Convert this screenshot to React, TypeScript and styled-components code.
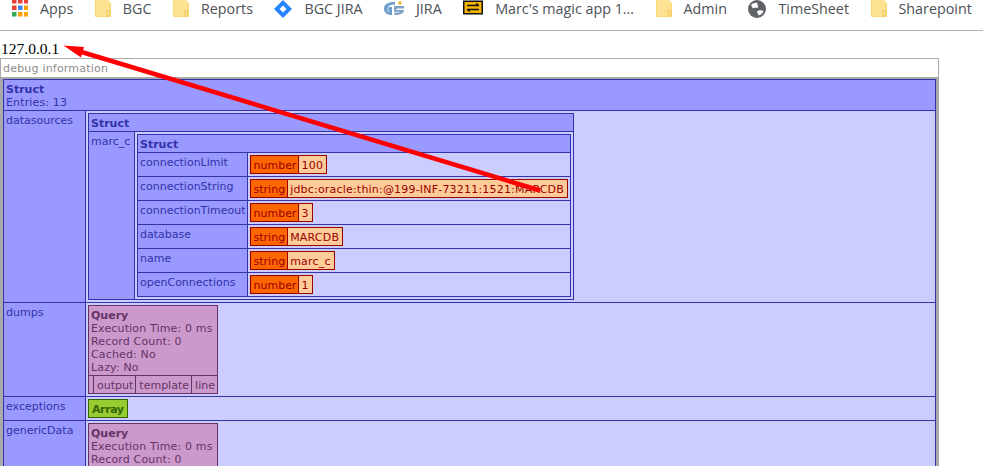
import React from "react";
import styled, { createGlobalStyle } from "styled-components";

const Global = createGlobalStyle`
  html, body { margin: 0; padding: 0; background: #fff; overflow: hidden; }
  #root { height: 466px; overflow: hidden; }
`;

const Page = styled.div`
  position: relative;
  width: 983px;
  height: 466px;
  overflow: hidden;
`;

const Bar = styled.nav`
  display: flex;
  align-items: flex-start;
  height: 30px;
  padding-left: 12px;
  gap: 21.5px;
  border-bottom: 1px solid #b4b4b4;
  box-sizing: content-box;
`;

const Bookmark = styled.div`
  display: flex;
  align-items: flex-start;
  gap: 12px;
  font: 14.3px/17px "Open Sans", sans-serif;
  color: #4d5156;
  white-space: nowrap;
  svg { flex: none; display: block; }
`;

const Address = styled.div`
  font: 15.5px/18px "Liberation Serif", serif;
  color: #000;
  padding: 9px 0 0 1px;
  height: 18px;
`;

const DebugBox = styled.section`
  margin-top: 0;
  width: 939px;
  box-sizing: border-box;
  border: 1px solid #a9a9a9;
  background: #a9a9a9;
  padding: 0 2px 2px 2px;
`;

const DebugTitle = styled.div`
  background: #fff;
  margin: 0 -2px 2px;
  height: 18px;
  padding-left: 2px;
  font: 11px/19px "DejaVu Sans", sans-serif;
  letter-spacing: 0.2px;
  color: #8c8c8c;
`;

const palette = {
  struct: { head: "#9999ff", body: "#ccccff", line: "#3333aa", text: "#3333aa" },
  query: { head: "#cc99cc", body: "#cc99cc", line: "#663366", text: "#663366" },
};

type Tone = keyof typeof palette;

const Dump = styled.table<{ $tone?: Tone; $wide?: boolean }>`
  border-collapse: collapse;
  border-spacing: 0;
  ${(p) => (p.$wide ? "width: 100%;" : "")}
  ${(p) => (p.$tone === "query" ? "min-width: 130px;" : "")}
  background: ${(p) => palette[p.$tone ?? "struct"].body};
  border: 1px solid ${(p) => palette[p.$tone ?? "struct"].line};
  color: ${(p) => palette[p.$tone ?? "struct"].text};
  font: 11px/13px "DejaVu Sans", sans-serif;
  td, th { border: 1px solid ${(p) => palette[p.$tone ?? "struct"].line}; }
`;

const Head = styled.th<{ $tone?: Tone }>`
  background: ${(p) => palette[p.$tone ?? "struct"].head};
  text-align: left;
  font-weight: normal;
  letter-spacing: 0.15px;
  padding: 3px 2px 1px;
  height: 13px;
  b { font-weight: bold; letter-spacing: 0; }
`;

const Key = styled.td<{ $min?: number }>`
  background: #9999ff;
  vertical-align: top;
  padding: 3px 1px 1px 2px;
  white-space: nowrap;
  width: ${(p) => p.$min ?? 1}px;
  min-width: ${(p) => p.$min ?? 0}px;
`;

const Val = styled.td`
  vertical-align: top;
  padding: 2px;
`;

const QueryCell = styled.td`
  padding: 3px 2px 1px 3px;
  height: 13px;
  white-space: nowrap;
  &:first-child { padding: 0 2px; }
`;

const Badge = styled.div`
  display: inline-flex;
  vertical-align: top;
  border: 1px solid #990000;
  font: 11px/13px "DejaVu Sans", sans-serif;
  color: #990000;
  background: #ffcc99;
`;

const BadgeType = styled.span`
  background: #ff6600;
  padding: 3px 2px 1px 3px;
  border-right: 1px solid #990000;
`;

const BadgeValue = styled.span`
  padding: 3px 3px 1px 2px;
  letter-spacing: 0.2px;
  white-space: nowrap;
`;

const ArrayTag = styled.div`
  display: inline-block;
  vertical-align: top;
  background: #99cc33;
  border: 1px solid #336600;
  color: #336600;
  font: bold 11px/13px "DejaVu Sans", sans-serif;
  letter-spacing: -0.4px;
  padding: 3px 3px 1px;
`;

const ArrowLayer = styled.svg`
  position: absolute;
  inset: 0;
  width: 983px;
  height: 466px;
  pointer-events: none;
`;

const Folder = () => (
  <svg width="16" height="18" viewBox="0 0 16 18">
    <path d="M.5 -1H11.5L15.5 3V16.5H.5Z" fill="#fde293" stroke="#fbd977" />
    <rect x="12" y="11" width="3" height="5" fill="none" stroke="#f2c85c" />
  </svg>
);

const AppsIcon = () => (
  <svg width="16" height="17" viewBox="0 0 16 17">
    {[
      ["#ea4335", "#ea4335", "#ea4335"],
      ["#ea4335", "#4285f4", "#fba50a"],
      ["#34a853", "#fba50a", "#fba50a"],
    ].map((row, r) =>
      row.map((c, i) => <rect key={`${r}${i}`} x={i * 6} y={r * 6.5 - 1} width="4.5" height="4.5" fill={c} />),
    )}
  </svg>
);

const DiamondIcon = () => (
  <svg width="18" height="18" viewBox="0 0 18 18">
    <path d="M9 0L18 9L9 18L0 9Z" fill="#2684ff" />
    <path d="M9 5.5L12.5 9L9 12.5L5.5 9Z" fill="#fff" />
  </svg>
);

const GIcon = () => (
  <svg width="20" height="17" viewBox="0 0 20 17">
    <path d="M11 2C5 1.5 0 4 0 8.5C0 13 3.5 15 8 15V7H5C3.5 9 4.5 11.5 6 12.5C1.5 11 3 4 11 4.5Z" fill="#6d9ecf" />
    <path d="M10 6H20V8.5H12.5V10H20C20 13.5 16.5 15 10.5 15V12.5C14 12.5 15.5 12.5 16 11.7H10Z" fill="#7fa3c7" />
    <circle cx="16" cy="3" r="1.8" fill="#f0b429" />
  </svg>
);

const MagicIcon = () => (
  <svg width="20" height="15" viewBox="0 0 20 15">
    <rect x="0.75" y="1.25" width="18.5" height="12.5" fill="#f7b500" stroke="#111" strokeWidth="1.5" />
    <path d="M4 5.5H16M13 3.5L16 5.5M16 9.5H4M7 11.5L4 9.5" fill="none" stroke="#111" strokeWidth="1.3" />
  </svg>
);

const GlobeIcon = () => (
  <svg width="18" height="18" viewBox="0 0 18 18">
    <circle cx="9" cy="9" r="9" fill="#5f6368" />
    <path d="M3 5C5 3 8 2.5 9.5 3C8.5 5 11 5.5 10 7.5C8 8 6 7 5 8.5C4.5 7.5 3.5 6 3 5ZM9 11.5C11 10 14 10 15.5 11C14.5 13.5 12.5 15 10.5 15.5C10.5 14 9 13 9 11.5Z" fill="#fff" />
  </svg>
);

const marks: [React.ReactNode, string][] = [
  [<AppsIcon />, "Apps"],
  [<Folder />, "BGC"],
  [<Folder />, "Reports"],
  [<DiamondIcon />, "BGC JIRA"],
  [<GIcon />, "JIRA"],
  [<MagicIcon />, "Marc's magic app 1..."],
  [<Folder />, "Admin"],
  [<GlobeIcon />, "TimeSheet"],
  [<Folder />, "Sharepoint"],
];

const connection: [string, string, string][] = [
  ["connectionLimit", "number", "100"],
  ["connectionString", "string", "jdbc:oracle:thin:@199-INF-73211:1521:MARCDB"],
  ["connectionTimeout", "number", "3"],
  ["database", "string", "MARCDB"],
  ["name", "string", "marc_c"],
  ["openConnections", "number", "1"],
];

const QueryDump = ({ short }: { short?: boolean }) => (
  <Dump $tone="query">
    <tbody>
      <tr>
        <Head $tone="query" colSpan={4}>
          <b>Query</b>
          <br />
          Execution Time: 0 ms
          <br />
          Record Count: 0
          {!short && (
            <>
              <br />
              Cached: No
              <br />
              Lazy: No
            </>
          )}
        </Head>
      </tr>
      {!short && (
        <tr>
          <QueryCell />
          <QueryCell>output</QueryCell>
          <QueryCell>template</QueryCell>
          <QueryCell>line</QueryCell>
        </tr>
      )}
    </tbody>
  </Dump>
);

export default function App() {
  return (
    <Page>
      <Global />
      <Bar>
        {marks.map(([icon, label]) => (
          <Bookmark key={label}>
            {icon}
            <span>{label}</span>
          </Bookmark>
        ))}
      </Bar>
      <Address>127.0.0.1</Address>
      <DebugBox>
        <DebugTitle>debug information</DebugTitle>
        <Dump $wide>
          <tbody>
            <tr>
              <Head colSpan={2}>
                <b>Struct</b>
                <br />
                Entries: 13
              </Head>
            </tr>
            <tr>
              <Key $min={78}>datasources</Key>
              <Val>
                <Dump>
                  <tbody>
                    <tr>
                      <Head colSpan={2}>
                        <b>Struct</b>
                      </Head>
                    </tr>
                    <tr>
                      <Key $min={42}>marc_c</Key>
                      <Val>
                        <Dump>
                          <tbody>
                            <tr>
                              <Head colSpan={2}>
                                <b>Struct</b>
                              </Head>
                            </tr>
                            {connection.map(([k, t, v]) => (
                              <tr key={k}>
                                <Key>{k}</Key>
                                <Val>
                                  <Badge>
                                    <BadgeType>{t}</BadgeType>
                                    <BadgeValue>{v}</BadgeValue>
                                  </Badge>
                                </Val>
                              </tr>
                            ))}
                          </tbody>
                        </Dump>
                      </Val>
                    </tr>
                  </tbody>
                </Dump>
              </Val>
            </tr>
            <tr>
              <Key $min={78}>dumps</Key>
              <Val>
                <QueryDump />
              </Val>
            </tr>
            <tr>
              <Key $min={78}>exceptions</Key>
              <Val>
                <ArrayTag>Array</ArrayTag>
              </Val>
            </tr>
            <tr>
              <Key $min={78}>genericData</Key>
              <Val>
                <QueryDump short />
              </Val>
            </tr>
          </tbody>
        </Dump>
      </DebugBox>
      <ArrowLayer viewBox="0 0 983 466">
        <path d="M540 190.5L75 50" stroke="#ff0000" strokeWidth="4.5" fill="none" />
        <path d="M63.5 45.5L84 47L81 57.5Z" fill="#ff0000" />
      </ArrowLayer>
    </Page>
  );
}
